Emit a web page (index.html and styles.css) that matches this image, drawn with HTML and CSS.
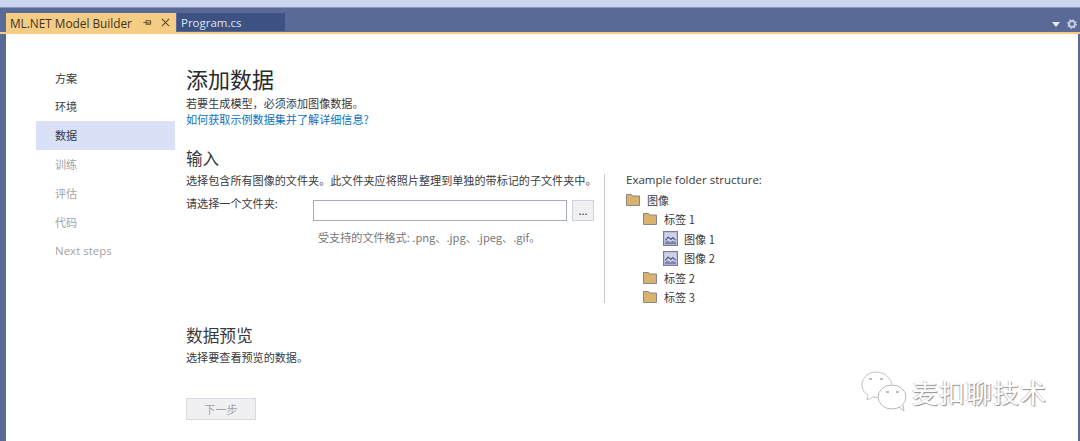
FILE: index.html
```html
<!DOCTYPE html>
<html lang="zh">
<head>
<meta charset="utf-8">
<title>ML.NET Model Builder</title>
<link rel="stylesheet" href="styles.css">
</head>
<body>
<svg class="defs" width="0" height="0">
  <symbol id="folder" viewBox="0 0 14 12">
    <path d="M.5 11.500V.5h5l1 1.500h7v9.500z" fill="#d9b26f" stroke="#8a8780"/>
  </symbol>
  <symbol id="image" viewBox="0 0 16 16">
    <rect x=".5" y=".5" width="15" height="15" fill="#b9bdd6" stroke="#6f76a3"/>
    <rect x="2" y="2" width="12" height="12" fill="#cfd3e6"/>
    <path d="M2.500 10l3-3.500 3 2.500 2-2 3 3" fill="none" stroke="#4f5788" stroke-width="1.200"/>
    <path d="M2 14v-2l3-2 3 2 2-1.500 4 1.500v2z" fill="#7d84b0"/>
  </symbol>
</svg>
<div class="app">
  <div class="topstrip"></div>
  <header class="tabbar">
    <div class="tab tab-active">
      <span>ML.NET Model Builder</span>
      <svg class="pin" width="9" height="9" viewBox="0 0 10 10"><path d="M.5 5h3M3.500 2.500v5M3.500 3h5v4h-5M3.500 5.500h5" fill="none" stroke="#5b4a2a"/></svg>
      <svg class="close" width="9" height="9" viewBox="0 0 10 10"><path d="M1 1l8 8M9 1l-8 8" fill="none" stroke="#5b4a2a" stroke-width="1.200"/></svg>
    </div>
    <div class="tab tab-other">Program.cs</div>
    <div class="tab-tools">
      <svg width="8" height="5" viewBox="0 0 8 5"><path d="M0 0h8L4 5z" fill="#e8ecf7"/></svg>
      <svg width="10" height="10" viewBox="0 0 10 10"><circle cx="5" cy="5" r="3" fill="none" stroke="#c3cbe2" stroke-width="2"/><circle cx="5" cy="5" r="4.300" fill="none" stroke="#c3cbe2" stroke-width="1.200" stroke-dasharray="1.500 1.900"/></svg>
    </div>
  </header>
  <div class="body">
    <nav class="nav">
      <div class="nav-item">方案</div>
      <div class="nav-item">环境</div>
      <div class="nav-item selected">数据</div>
      <div class="nav-item disabled">训练</div>
      <div class="nav-item disabled">评估</div>
      <div class="nav-item disabled">代码</div>
      <div class="nav-item disabled latin">Next steps</div>
    </nav>
    <main class="main">
      <h1 class="title">添加数据</h1>
      <p class="line">若要生成模型，必须添加图像数据。</p>
      <a class="line link">如何获取示例数据集并了解详细信息?</a>
      <div class="columns">
        <section class="input-col">
          <h2 class="heading">输入</h2>
          <p class="line desc">选择包含所有图像的文件夹。此文件夹应将照片整理到单独的带标记的子文件夹中。</p>
          <div class="picker">
            <label class="picker-label">请选择一个文件夹:</label>
            <div class="field"></div>
            <div class="browse">...</div>
          </div>
          <p class="formats">受支持的文件格式: .png、.jpg、.jpeg、.gif。</p>
        </section>
        <aside class="example">
          <div class="example-title">Example folder structure:</div>
          <div class="row"><svg class="ico-f"><use href="#folder"/></svg>图像</div>
          <div class="row lvl1"><svg class="ico-f"><use href="#folder"/></svg>标签 1</div>
          <div class="row lvl2"><svg class="ico-i"><use href="#image"/></svg>图像 1</div>
          <div class="row lvl2"><svg class="ico-i"><use href="#image"/></svg>图像 2</div>
          <div class="row lvl1"><svg class="ico-f"><use href="#folder"/></svg>标签 2</div>
          <div class="row lvl1"><svg class="ico-f"><use href="#folder"/></svg>标签 3</div>
        </aside>
      </div>
      <h2 class="heading preview">数据预览</h2>
      <p class="line preview-sub">选择要查看预览的数据。</p>
      <div class="next">下一步</div>
    </main>
  </div>
  <div class="watermark">
    <svg width="50" height="42" viewBox="0 0 50 42">
      <path d="M31 14C29 7 23 2 15 2 7 2 1 8 1 15c0 4 2 8 6 10l-1 5 6-3c2 .5 4 .5 6 .3" fill="none" stroke="#c4c4c4"/>
      <ellipse cx="31" cy="27" rx="14" ry="12" fill="#fff" stroke="#b8b8b8"/>
      <path d="M38 37l5 4-1-6" fill="#fff" stroke="#b8b8b8"/>
      <path d="M8 9h3M19 9h3M25 22h3M35 22h3" stroke="#aaa" stroke-width="1.500"/>
    </svg>
    <span>麦扣聊技术</span>
  </div>
</div>
</body>
</html>
```
FILE: styles.css
```css
* { box-sizing: border-box; }
html, body { margin: 0; padding: 0; }
body {
  width: 1080px;
  height: 441px;
  overflow: hidden;
  background: #fff;
  font-family: "Noto Sans CJK SC", "Open Sans", sans-serif;
  font-size: 11.100px;
  color: #3a3a3d;
}
.defs { position: absolute; }
.app {
  position: relative;
  display: flex;
  flex-direction: column;
  height: 441px;
  background: #5a6a96;
}
.topstrip {
  height: 8px;
  background: #ccd5f0;
  border-bottom: 1px solid #8c97bb;
}
.tabbar {
  display: flex;
  height: 26px;
  padding: 5px 2px 0 6px;
  border-bottom: 2px solid #f5cc84;
  align-items: flex-start;
}
.tab {
  display: flex;
  align-items: center;
  height: 19px;
  font-family: "Open Sans", "Noto Sans", sans-serif;
  font-size: 11.500px;
  white-space: nowrap;
}
.tab-active {
  width: 170px;
  height: 19px;
  padding-left: 4px;
  background: #f5cc84;
  color: #3c3424;
  font-size: 11.800px;
}
.tab-active span { width: 133px; }
.pin { margin-right: 9px; }
.tab-other {
  width: 108px;
  height: 18px;
  margin-left: 1px;
  padding-left: 4px;
  background: #3d5283;
  color: #dce3f2;
}
.tab-tools {
  margin-left: auto;
  height: 19px;
  display: flex;
  align-items: center;
  gap: 7px;
  padding: 3px 1px 0 0;
}
.body {
  flex: 1;
  display: flex;
  margin: 0 2px 0 6px;
  background: #fff;
  padding-left: 30px;
  min-height: 0;
}
.nav {
  width: 139px;
  flex: none;
  padding-top: 29.500px;
}
.nav-item {
  height: 28.900px;
  padding-left: 19px;
  line-height: 28.900px;
}
.nav-item.selected { background: #d9e0f8; }
.nav-item.disabled { color: #a2a4a5; }
.nav-item.latin { font-family: "Open Sans", sans-serif; font-size: 11.500px; }
.main {
  flex: 1;
  padding: 30px 0 0 11px;
}
.title {
  margin: 0;
  height: 32px;
  font-size: 22px;
  font-weight: 400;
  line-height: 29px;
  color: #2a2a2c;
}
.line {
  display: block;
  margin: 0;
  height: 15px;
  line-height: 15px;
  white-space: nowrap;
}
.link { color: #0e70c0; margin-top: 1px; }
.columns {
  display: flex;
  height: 155px;
  margin-top: 20px;
}
.input-col { width: 418px; flex: none; }
.heading {
  margin: 0;
  height: 22px;
  font-size: 16.500px;
  font-weight: 400;
  line-height: 22px;
  color: #3a3a3d;
}
.desc { margin-top: 4px; }
.picker {
  display: flex;
  align-items: flex-start;
  margin-top: 12px;
}
.picker-label {
  width: 127px;
  flex: none;
  line-height: 15px;
  margin-top: -4px;
}
.field {
  width: 254px;
  height: 21px;
  background: #fff;
  border: 1px solid #a3abbd;
}
.browse {
  width: 22px;
  height: 21px;
  margin-left: 5px;
  background: #f0f0f2;
  border: 1px solid #cfd2dc;
  text-align: center;
  font-size: 11px;
  line-height: 18px;
}
.formats {
  margin: 8px 0 0 132px;
  height: 16px;
  line-height: 16px;
  color: #76787c;
  white-space: nowrap;
}
.example {
  width: 200px;
  padding-left: 21px;
  border-left: 1px solid #c8cad0;
  height: 129px;
  margin-top: 27px;
}
.example-title {
  height: 18px;
  line-height: 16px;
  font-family: "Open Sans", "Noto Sans", sans-serif;
  font-size: 11.500px;
  margin-top: -2px;
}
.row {
  display: flex;
  align-items: center;
  height: 19.500px;
  white-space: nowrap;
}
.lvl1 { padding-left: 17px; }
.lvl2 { padding-left: 37px; }
.ico-f { width: 14px; height: 12px; margin-right: 7px; flex: none; }
.ico-i { width: 15px; height: 15px; margin-right: 6px; flex: none; }
.preview { margin-top: 22px; font-size: 16.700px; }
.preview-sub { margin-top: 4px; }
.next {
  width: 70px;
  height: 22px;
  margin-top: 33px;
  background: #f0f0f2;
  border: 1px solid #d9dbe3;
  color: #a2a4a5;
  text-align: center;
  line-height: 20px;
}
.watermark {
  position: absolute;
  left: 861px;
  top: 370px;
  display: flex;
  align-items: center;
  gap: 1px;
}
.watermark span {
  font-size: 26px;
  letter-spacing: 1px;
  color: #fff;
  text-shadow: 1px 1px 1px #8f8f8f, -1px 0 1px #c8c8c8;
}
```
